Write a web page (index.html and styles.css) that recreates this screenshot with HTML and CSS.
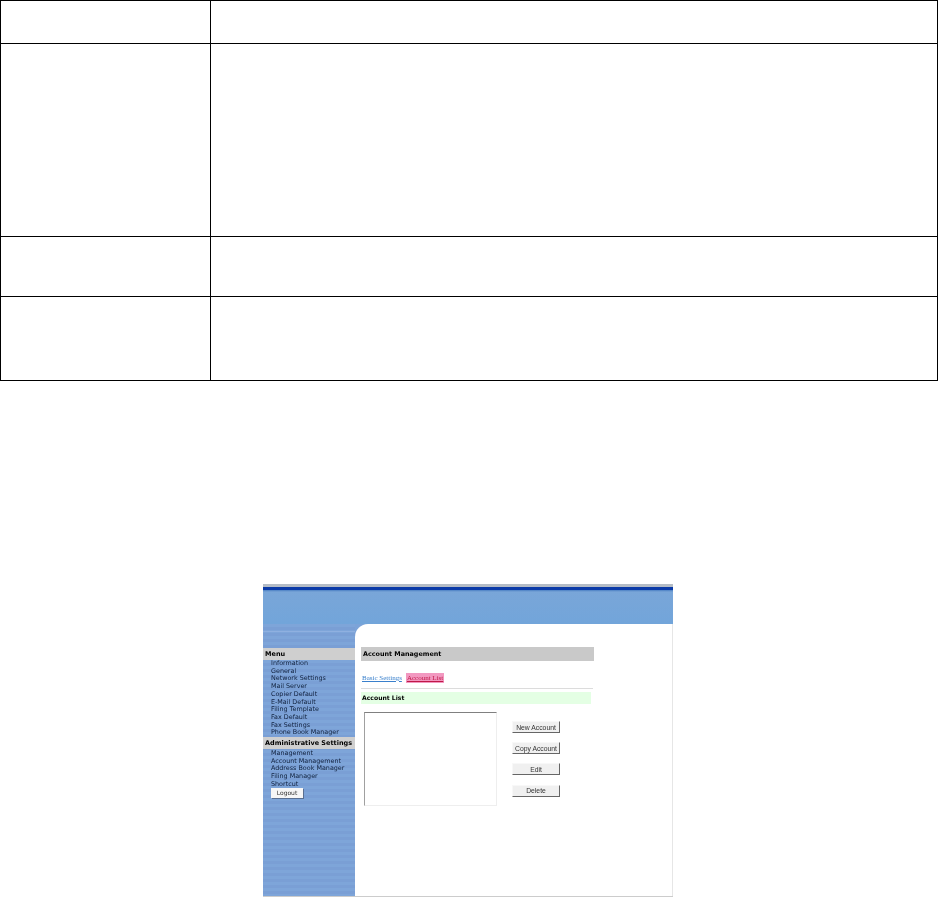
FILE: index.html
```html
<!DOCTYPE html>
<html lang="en">
<head>
<meta charset="utf-8">
<title>Account Management</title>
<link rel="stylesheet" href="styles.css">
</head>
<body>
<table class="spec">
  <tr class="r1"><td class="c1"></td><td></td></tr>
  <tr class="r2"><td></td><td></td></tr>
  <tr class="r3"><td></td><td></td></tr>
  <tr class="r4"><td></td><td></td></tr>
</table>
<div class="shot">
  <div class="banner"><div class="banner-line"></div></div>
  <div class="body">
    <aside class="side">
      <div class="side-title">Menu</div>
      <ul class="side-list">
        <li>Information</li><li>General</li><li>Network Settings</li><li>Mail Server</li><li>Copier Default</li>
        <li>E-Mail Default</li><li>Filing Template</li><li>Fax Default</li><li>Fax Settings</li><li>Phone Book Manager</li>
      </ul>
      <div class="side-title">Administrative Settings</div>
      <ul class="side-list second">
        <li>Management</li><li>Account Management</li><li>Address Book Manager</li><li>Filing Manager</li><li>Shortcut</li>
      </ul>
      <button class="logout" type="button">Logout</button>
    </aside>
    <main class="main">
      <h1 class="page-title">Account Management</h1>
      <nav class="tabs"><a class="tab">Basic Settings</a><a class="tab active">Account List</a></nav>
      <h2 class="section">Account List</h2>
      <div class="panel">
        <div class="listbox"></div>
        <div class="actions">
          <button class="action" type="button">New Account</button>
          <button class="action" type="button">Copy Account</button>
          <button class="action" type="button">Edit</button>
          <button class="action" type="button">Delete</button>
        </div>
      </div>
    </main>
  </div>
</div>
</body>
</html>
```
FILE: styles.css
```css
html, body { margin: 0; padding: 0; background: #fff; overflow: hidden; }
body { height: 897px; font-family: "DejaVu Sans", sans-serif; }

.spec { width: 938px; table-layout: fixed; border-collapse: collapse; }
.spec td { border: 1px solid #000; padding: 0; }
.spec .c1 { width: 209px; }
.r1 { height: 43px; }
.r2 { height: 193px; }
.r3 { height: 60px; }
.r4 { height: 84px; }

.shot {
  width: 410px; height: 313px; margin: 203px 0 0 263px; box-sizing: border-box;
  display: flex; flex-direction: column; background: #fff;
  border-bottom: 1px solid #ccc;
  filter: blur(0.4px);
}
.banner {
  height: 40px; box-sizing: border-box; flex: none;
  background: linear-gradient(#7ba6d8, #72a5da);
}
.banner-line { height: 8px; background: linear-gradient(#b4bcc6 0 3px, #0a3aa8 3px 6px, #4b80c4 6px, #7ba6d8); }
.body { flex: 1; display: flex; min-height: 0; background: #7ca3d8; }
.side {
  width: 92px; flex: none; padding-top: 24px; color: #10203c;
  background:
    linear-gradient(transparent 7px, #8fb0e0 7px 8px, transparent 8px),
    repeating-linear-gradient(#7ea5d9 0 3px, #7a9fd5 3px 6px);
}
.side-title {
  height: 12px; line-height: 12px; padding-left: 2px;
  background: #cfcfcf; color: #000; font-size: 6.5px; font-weight: bold; white-space: nowrap;
}
.side-list { list-style: none; margin: 0; padding: 0 0 0 8px; font-size: 6.4px; line-height: 7.7px; white-space: nowrap; }
.side-list.second { padding-top: 1px; }
.logout {
  display: block; width: 32px; height: 10px; margin: -1px 0 0 8px; padding: 0;
  border: 0; background: #f6f6f6; color: #333; font: 6px "DejaVu Sans", sans-serif;
  box-shadow: 1px 1px 0 #5a6f90;
}
.main {
  flex: 1; background: #fff; border-top-left-radius: 13px;
  border-right: 1px solid #e6e6e6;
  padding: 23px 0 0 6px; min-width: 0;
}
.page-title {
  width: 233px; height: 14px; line-height: 14px; margin: 0; padding-left: 2px; box-sizing: border-box;
  background: #c9c9c9; color: #000; font-size: 6.4px; font-weight: bold;
}
.tabs {
  width: 232px; box-sizing: border-box; height: 28px; padding: 12px 0 0 1px; display: flex; gap: 4px;
  border-bottom: 1px solid #dcdcdc;
  font: 7px/12px "Liberation Serif", serif;
}
.tab { color: #3a80cc; text-decoration: underline; height: 10px; line-height: 10px; }
.tab.active { color: #c01848; background: #f298c0; padding: 0 1px; }
.section {
  width: 230px; height: 12px; line-height: 12px; margin: 3px 0 0; padding-left: 1px; box-sizing: border-box;
  background: #e4ffe4; color: #000; font-size: 6.1px; font-weight: bold;
}
.panel { display: flex; padding: 8px 0 0 3px; }
.listbox {
  width: 133px; height: 94px; box-sizing: border-box; background: #fff;
  border: 1px solid #eee; border-top-color: #808080; border-left-color: #a0a0a0;
}
.actions { margin: 9px 0 0 15px; display: flex; flex-direction: column; gap: 9.2px; }
.action {
  width: 48px; height: 12px; padding: 0; box-sizing: border-box; background: #f0f0f0; color: #333;
  border: 1px solid #f8f8f8; border-right-color: #666; border-bottom-color: #666;
  font: 6.8px "Liberation Sans", sans-serif;
}
```
